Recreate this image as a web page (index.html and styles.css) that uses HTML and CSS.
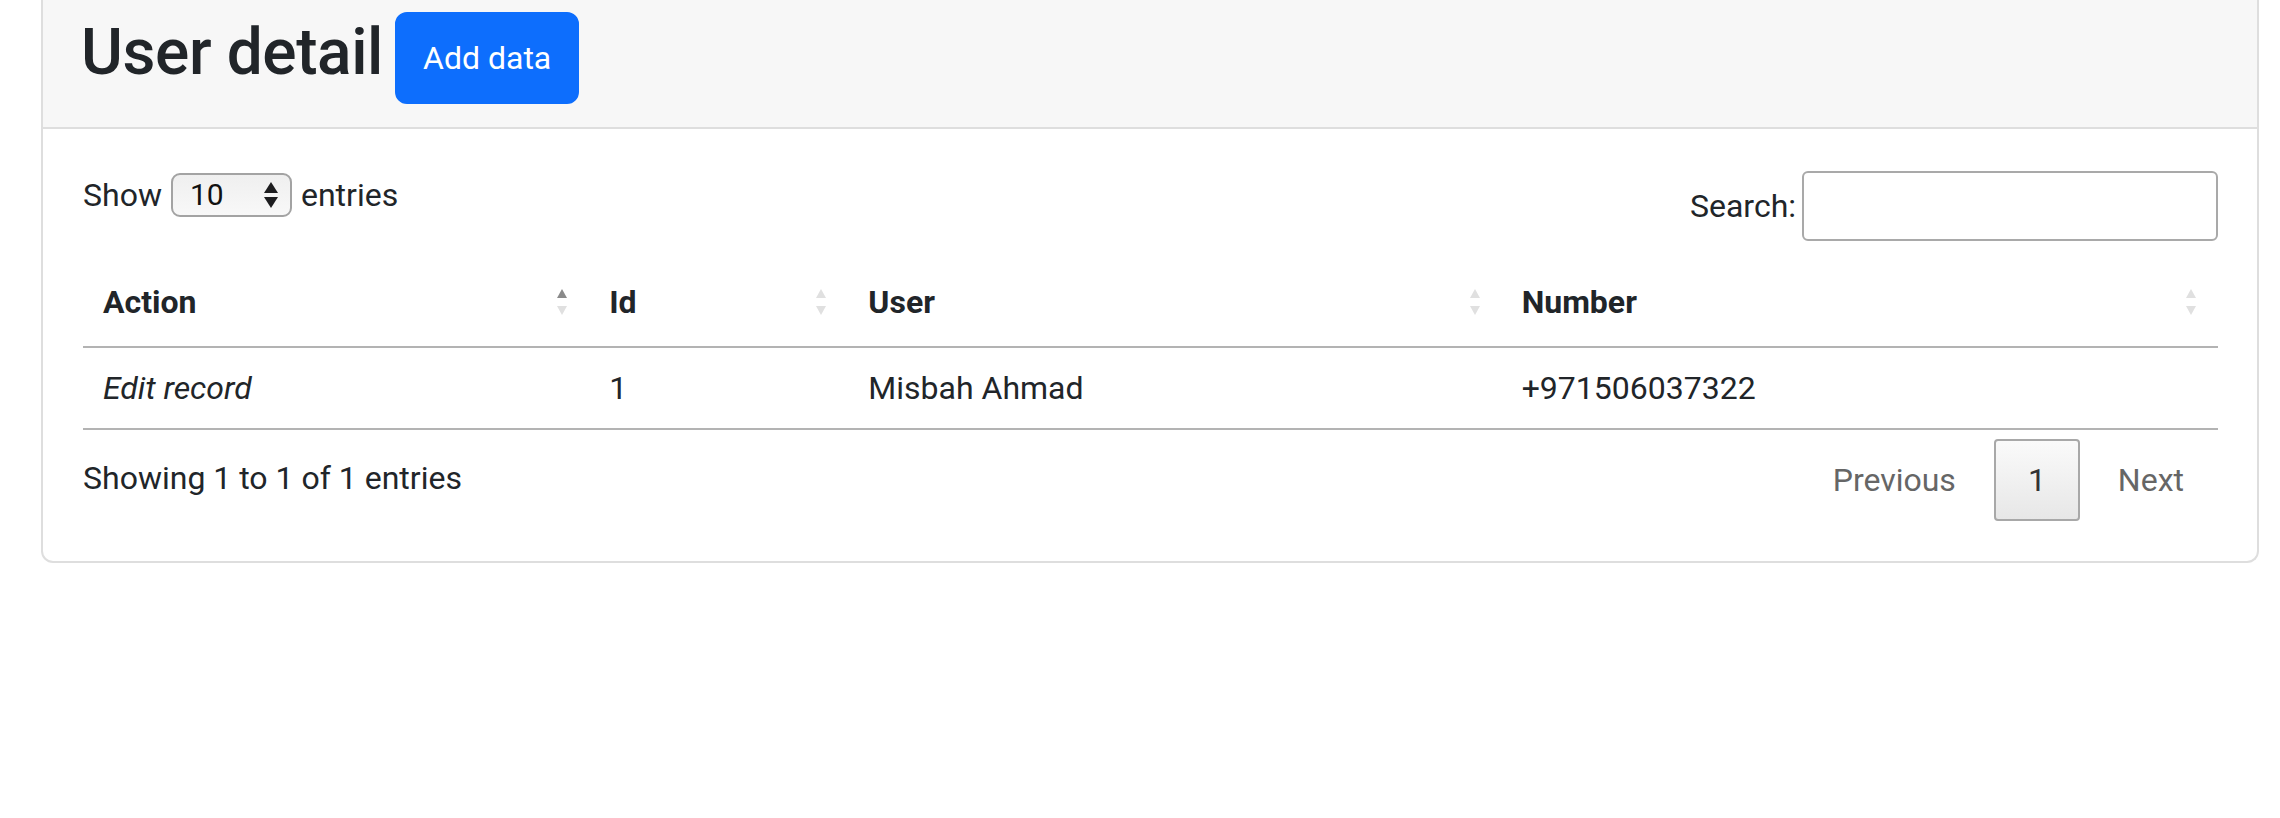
FILE: index.html
```html
<!DOCTYPE html>
<html lang="en">
<head>
<meta charset="utf-8">
<title>User detail</title>
<link rel="stylesheet" href="styles.css">
</head>
<body>
<div class="card">
  <div class="card-header">
    <h1 class="title">User detail</h1>
    <a class="btn-primary">Add data</a>
  </div>
  <div class="card-body">
    <div class="dt-top">
      <div class="dt-length">
        <span>Show</span>
        <span class="select-box"><span class="select-val">10</span>
          <svg class="select-arrows" width="14" height="26" viewBox="0 0 14 26"><polygon points="0,11 7,0 14,11" fill="#1d1d1f"/><polygon points="0,15 14,15 7,26" fill="#1d1d1f"/></svg>
        </span>
        <span>entries</span>
      </div>
      <div class="dt-filter">
        <label class="search-label" for="q">Search:</label>
        <input id="q" class="search-input" type="text">
      </div>
    </div>
    <table class="dt">
      <colgroup>
        <col class="c-action"><col class="c-id"><col class="c-user"><col class="c-number">
      </colgroup>
      <thead>
        <tr>
          <th><div class="th-inner"><span>Action</span><svg class="sort" width="10" height="26" viewBox="0 0 10 26"><polygon class="on" points="0,9 5,0 10,9"/><polygon class="off" points="0,17 10,17 5,26"/></svg></div></th>
          <th><div class="th-inner"><span>Id</span><svg class="sort" width="10" height="26" viewBox="0 0 10 26"><polygon class="off" points="0,9 5,0 10,9"/><polygon class="off" points="0,17 10,17 5,26"/></svg></div></th>
          <th><div class="th-inner"><span>User</span><svg class="sort" width="10" height="26" viewBox="0 0 10 26"><polygon class="off" points="0,9 5,0 10,9"/><polygon class="off" points="0,17 10,17 5,26"/></svg></div></th>
          <th><div class="th-inner"><span>Number</span><svg class="sort" width="10" height="26" viewBox="0 0 10 26"><polygon class="off" points="0,9 5,0 10,9"/><polygon class="off" points="0,17 10,17 5,26"/></svg></div></th>
        </tr>
      </thead>
      <tbody>
        <tr>
          <td><em>Edit record</em></td>
          <td>1</td>
          <td>Misbah Ahmad</td>
          <td>+971506037322</td>
        </tr>
      </tbody>
    </table>
    <div class="dt-bottom">
      <div class="dt-info">Showing 1 to 1 of 1 entries</div>
      <div class="dt-paginate">
        <a class="pg disabled">Previous</a>
        <a class="pg current">1</a>
        <a class="pg disabled">Next</a>
      </div>
    </div>
  </div>
</div>
</body>
</html>
```
FILE: styles.css
```css
* { box-sizing: border-box; }

html, body { background: #ffffff; }

body {
  margin: 0;
  padding: 0 21px 0 41px;
  font-family: Roboto, "Liberation Sans", Arial, sans-serif;
  font-size: 32px;
  line-height: 1.5;
  color: #212529;
}

.card {
  border: 2px solid #dedede;
  border-top: 0;
  border-radius: 0 0 12px 12px;
  background: #ffffff;
}

.card-header {
  display: flex;
  align-items: flex-start;
  gap: 12px;
  padding: 12px 38px 23px;
  background: #f7f7f7;
  border-bottom: 2px solid #dedede;
}

.title {
  margin: 3px 0 0;
  font-size: 64px;
  font-weight: 500;
  line-height: 1.2;
  letter-spacing: -0.4px;
  color: #212529;
}

.btn-primary {
  display: inline-block;
  padding: 20px 26px;
  border: 2px solid #0d6efd;
  border-radius: 12px;
  background: #0d6efd;
  color: #ffffff;
  font-size: 32px;
  line-height: 48px;
  text-decoration: none;
}

.card-body {
  padding: 42px 39px 40px 40px;
}

.dt-top {
  display: flex;
  justify-content: space-between;
  align-items: flex-start;
}

.dt-length {
  display: flex;
  align-items: center;
  gap: 9px;
  height: 48px;
}

.select-box {
  display: flex;
  align-items: center;
  justify-content: space-between;
  width: 121px;
  height: 44px;
  padding: 0 12px 0 17px;
  border: 2px solid #a3a3a3;
  border-radius: 9px;
  background: linear-gradient(to bottom, #efefef 0%, #f8f8f8 100%);
  font-size: 30px;
  line-height: 1;
  color: #111111;
}

.select-arrows { display: block; }

.dt-filter {
  display: flex;
  align-items: center;
}

.search-label {
  color: #212529;
}

.search-input {
  width: 416px;
  height: 70px;
  margin: 0 0 0 6px;
  padding: 10px;
  border: 2px solid #a9a9a9;
  border-radius: 6px;
  background: transparent;
  font: inherit;
  outline: none;
}

.dt {
  width: 100%;
  margin-top: 17px;
  table-layout: fixed;
  border-collapse: separate;
  border-spacing: 0;
}

.c-action { width: 506px; }
.c-id { width: 259px; }
.c-user { width: 653px; }
.c-number { width: 716px; }

.dt th {
  padding: 20px 22px 20px 20px;
  text-align: left;
  font-weight: 700;
  border-bottom: 2px solid #b3b3b3;
}

.th-inner {
  display: flex;
  align-items: center;
  justify-content: space-between;
}

.sort { display: block; flex: none; }
.sort .on { fill: #8a8a8a; }
.sort .off { fill: #e0e0e0; }

.dt td {
  padding: 16px 20px;
  border-bottom: 2px solid #b3b3b3;
}

.dt td em { font-style: italic; }

.dt-bottom {
  display: flex;
  justify-content: space-between;
  align-items: flex-start;
}

.dt-info {
  padding-top: 24px;
}

.dt-paginate {
  display: flex;
  gap: 4px;
  padding-top: 9px;
}

.pg {
  display: block;
  padding: 16px 32px;
  border: 2px solid transparent;
  border-radius: 4px;
  line-height: 46px;
  color: #666666;
  text-decoration: none;
}

.pg.current {
  color: #333333;
  border-color: #a8a8a8;
  background: linear-gradient(to bottom, #fafafa 0%, #e7e7e7 100%);
}
```
